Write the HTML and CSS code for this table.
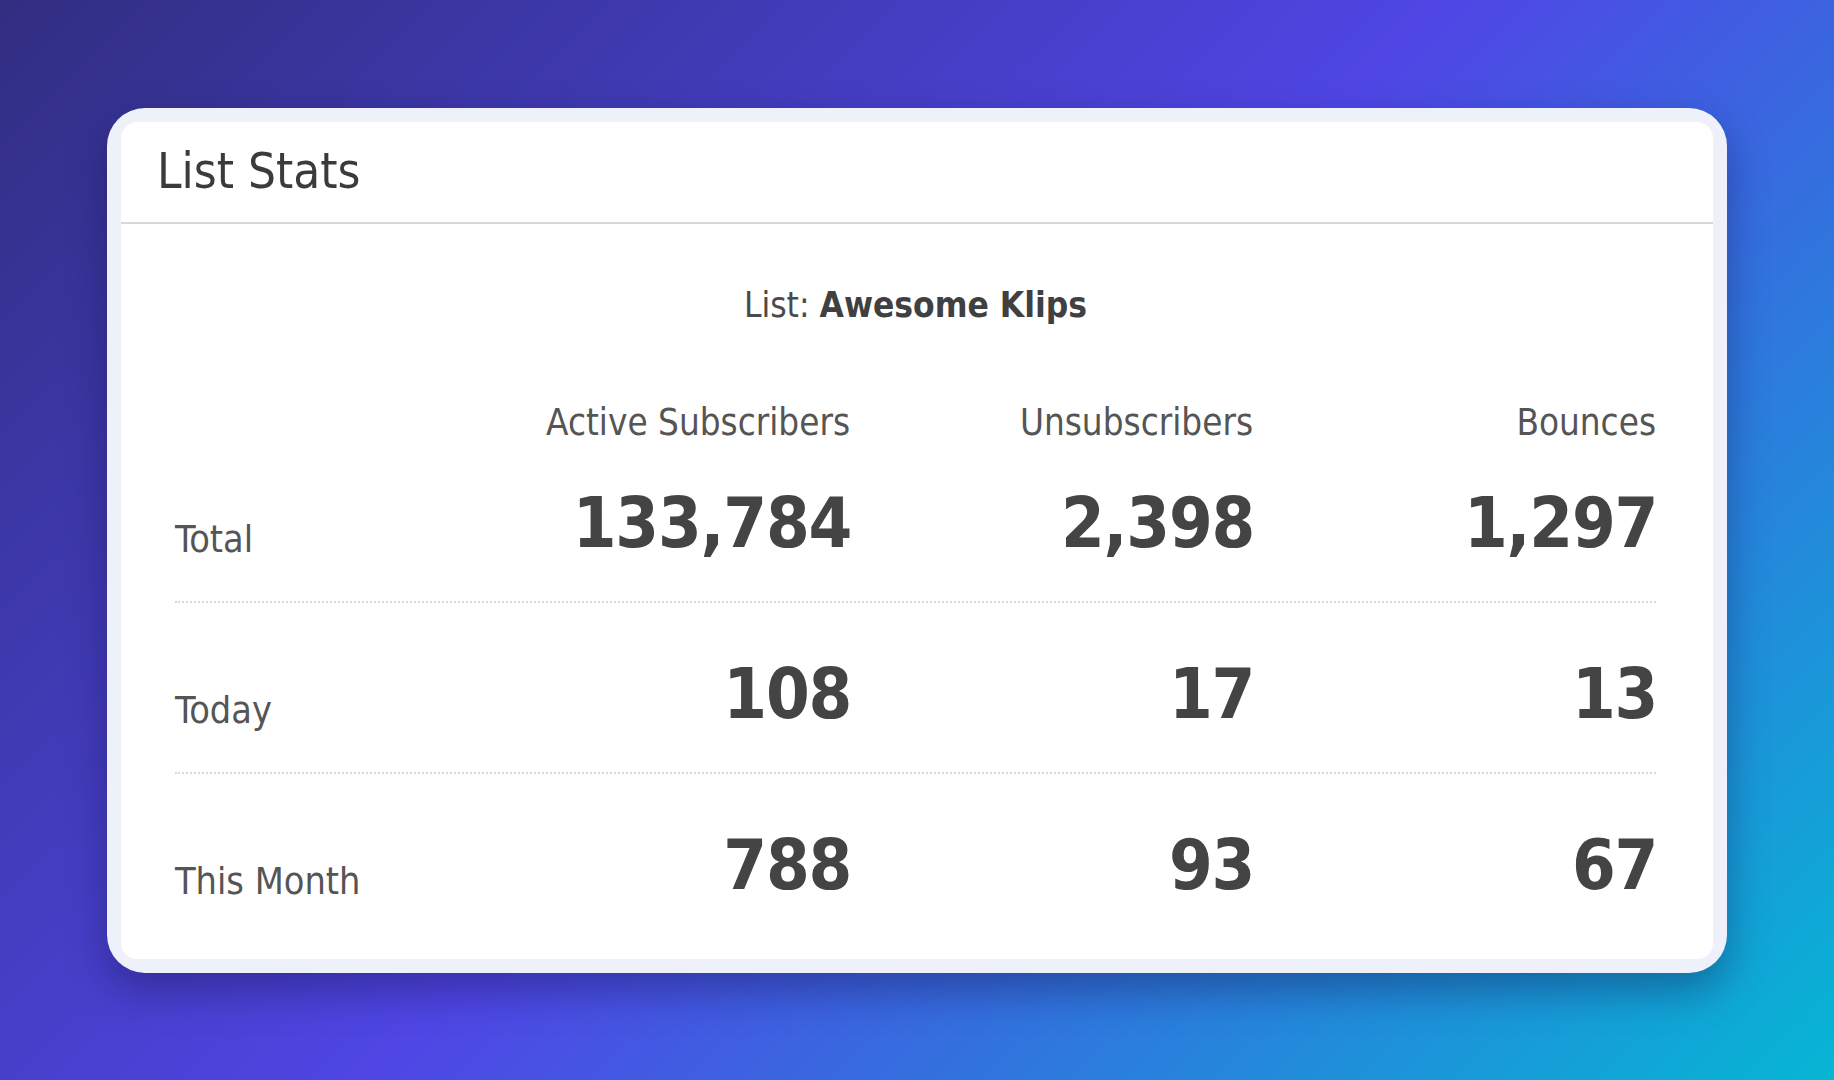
FILE: index.html
```html
<!DOCTYPE html>
<html lang="en">
<head>
<meta charset="utf-8">
<title>List Stats</title>
<link rel="stylesheet" href="styles.css">
</head>
<body>
<main class="stage">
  <section class="card">
    <div class="card-inner">
      <header class="card-head">
        <h1 class="card-title">List Stats</h1>
      </header>
      <div class="card-body">
        <p class="list-name">List: <strong>Awesome Klips</strong></p>
        <div class="stats">
          <div class="stats-row stats-head">
            <span></span>
            <span class="col-title">Active Subscribers</span>
            <span class="col-title">Unsubscribers</span>
            <span class="col-title">Bounces</span>
          </div>
          <div class="stats-row data-row first-row">
            <span class="row-label">Total</span>
            <span class="num">133,784</span>
            <span class="num">2,398</span>
            <span class="num">1,297</span>
          </div>
          <div class="stats-row data-row">
            <span class="row-label">Today</span>
            <span class="num">108</span>
            <span class="num">17</span>
            <span class="num">13</span>
          </div>
          <div class="stats-row data-row last-row">
            <span class="row-label">This Month</span>
            <span class="num">788</span>
            <span class="num">93</span>
            <span class="num">67</span>
          </div>
        </div>
      </div>
    </div>
  </section>
</main>
</body>
</html>
```
FILE: styles.css
```css
* { box-sizing: border-box; }

html, body {
  margin: 0;
  padding: 0;
  height: 100%;
}

body {
  font-family: "DejaVu Sans Condensed", "DejaVu Sans", sans-serif;
  background: linear-gradient(135deg, #312e81 0%, #4f46e5 50%, #06b6d4 100%);
  color: #444;
}

.stage {
  height: 100%;
  display: flex;
  align-items: center;
  justify-content: center;
}

.card {
  width: 1620px;
  height: 865px;
  padding: 14px;
  border-radius: 38px;
  background: #eef0fa;
  box-shadow: 0 18px 40px rgba(15, 10, 60, 0.35);
}

.card-inner {
  height: 100%;
  background: #ffffff;
  border-radius: 16px;
  display: flex;
  flex-direction: column;
  overflow: hidden;
}

.card-head {
  height: 102px;
  flex: none;
  display: flex;
  align-items: center;
  padding-left: 36px;
  border-bottom: 2px solid #d8d8d8;
}

.card-title {
  margin: 0;
  font-size: 49px;
  font-weight: 400;
  line-height: 1;
  color: #3b3b3b;
}

.card-body {
  flex: 1;
  padding: 64px 57px 16px 54px;
}

.list-name {
  margin: 0;
  text-align: center;
  font-size: 35px;
  line-height: 1;
  color: #4a4a4a;
}

.list-name strong {
  font-weight: 700;
  color: #404040;
}

.stats {
  margin-top: 82px;
}

.stats-row {
  display: grid;
  grid-template-columns: 272px repeat(3, 1fr);
  align-items: end;
}

.col-title {
  text-align: right;
  font-size: 36.5px;
  line-height: 1;
  color: #555;
}

.data-row {
  height: 171px;
  padding-bottom: 43px;
  border-bottom: 2px dotted #d9d9d9;
}

.data-row.first-row {
  height: 162px;
}

.data-row.last-row {
  height: 169px;
  border-bottom: none;
}

.row-label {
  font-size: 37.5px;
  line-height: 1;
  color: #555;
}

.num {
  text-align: right;
  font-size: 70px;
  font-weight: 700;
  line-height: 1;
  letter-spacing: -1.2px;
  margin-right: -1.2px;
  color: #444;
}
```
